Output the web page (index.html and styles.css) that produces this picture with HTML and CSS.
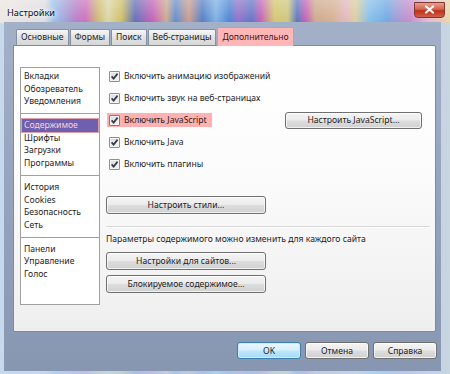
FILE: index.html
```html
<!DOCTYPE html>
<html lang="ru">
<head>
  <meta charset="UTF-8">
  <title>Настройки</title>
  <link rel="stylesheet" href="styles.css">
</head>
<body>
  <div class="window">
    <div class="titlebar">
      <span class="title">Настройки</span>
      <span class="close">
        <svg width="11" height="9" viewBox="0 0 11 9"><path d="M2 1.5 L9 7.5 M9 1.5 L2 7.5" stroke="#fff" stroke-width="2.2" stroke-linecap="round"/></svg>
      </span>
    </div>
    <div class="client">
      <div class="tabs">
        <div class="tab">Основные</div>
        <div class="tab">Формы</div>
        <div class="tab">Поиск</div>
        <div class="tab">Веб-страницы</div>
        <div class="tab active">Дополнительно</div>
      </div>
      <div class="panel">
        <div class="sections">
          <div class="group first">
            <div class="item">Вкладки</div>
            <div class="item">Обозреватель</div>
            <div class="item">Уведомления</div>
          </div>
          <div class="group">
            <div class="item selected">Содержимое</div>
            <div class="item">Шрифты</div>
            <div class="item">Загрузки</div>
            <div class="item">Программы</div>
          </div>
          <div class="group">
            <div class="item">История</div>
            <div class="item">Cookies</div>
            <div class="item">Безопасность</div>
            <div class="item">Сеть</div>
          </div>
          <div class="group">
            <div class="item">Панели</div>
            <div class="item">Управление</div>
            <div class="item">Голос</div>
          </div>
        </div>
        <div class="options">
          <div class="opt"><span class="label"><span class="check"></span>Включить анимацию изображений</span></div>
          <div class="opt"><span class="label"><span class="check"></span>Включить звук на веб-страницах</span></div>
          <div class="opt"><span class="label marked"><span class="check"></span>Включить JavaScript</span><button class="btn btn-js">Настроить JavaScript...</button></div>
          <div class="opt"><span class="label"><span class="check"></span>Включить Java</span></div>
          <div class="opt"><span class="label"><span class="check"></span>Включить плагины</span></div>
          <button class="btn btn-wide styles-btn">Настроить стили...</button>
          <div class="sep"></div>
          <p class="note">Параметры содержимого можно изменить для каждого сайта</p>
          <button class="btn btn-wide site-btn">Настройки для сайтов...</button>
          <button class="btn btn-wide block-btn">Блокируемое содержимое...</button>
        </div>
      </div>
      <div class="footer">
        <button class="btn btn-foot default">OK</button>
        <button class="btn btn-foot">Отмена</button>
        <button class="btn btn-foot">Справка</button>
      </div>
    </div>
  </div>
</body>
</html>
```
FILE: styles.css
```css
body {
  margin: 0;
  font-family: "Noto Sans", "Open Sans", sans-serif;
  font-size: 8.6px;
  color: #1e1e1e;
}

.window {
  width: 450px;
  height: 374px;
  box-sizing: border-box;
  padding: 0 9px 3px 4px;
  background:
    linear-gradient(180deg, rgba(255,255,255,0.35), rgba(255,255,255,0.1) 22px, rgba(190,215,240,0.8) 24px, rgba(190,215,240,0.8)),
    linear-gradient(90deg, #e9e4dc 0%, #dcd9e0 10%, #8fb8e8 12%, #9c8fd0 15%, #b070c0 17%, #c860b8 19%, #c8b860 22%, #d8d0a0 24%, #c8b850 27%, #5060b0 30%, #c050b0 34%, #c8a080 37%, #5080c8 39%, #c89080 42%, #4070c0 45%, #70a8e0 48%, #3878d0 51%, #8860c0 53%, #5068c0 56%, #c050b0 58%, #d0c060 61%, #c8c070 64%, #4868b8 66%, #c050b0 68%, #c8a080 70%, #d0a888 74%, #e0b0b8 77%, #d8c890 79%, #78b8e8 82%, #60a0e0 86%, #9090d0 88%, #c080c8 91%, #e0b0d0 95%, #e8d0a0 100%);
}

.titlebar {
  height: 22px;
  display: flex;
  align-items: center;
  justify-content: space-between;
  margin-left: -4px;
  margin-right: -9px;
  padding: 0 5px 0 7px;
  box-sizing: border-box;
}

.title {
  font-size: 9.2px;
  color: #111;
  text-shadow: 0 0 4px #fff, 0 0 6px #fff;
  margin-top: 2px;
}

.close {
  width: 29px;
  height: 14px;
  margin-top: -3px;
  border: 1px solid #7a3a30;
  border-radius: 0 0 4px 4px;
  background: linear-gradient(180deg, #e8a090 0%, #d86050 45%, #c03018 55%, #d06048 100%);
  display: flex;
  align-items: center;
  justify-content: center;
}

.client {
  height: 349px;
  box-sizing: border-box;
  padding: 6px 4px 0 0;
  background: linear-gradient(180deg, #a2b0c8 0%, #95a4bd 50%, #8897b1 100%);
  display: flex;
  flex-direction: column;
}

.tabs {
  display: flex;
  padding-left: 12px;
  height: 17px;
  align-items: flex-end;
  position: relative;
  z-index: 1;
}

.tab {
  height: 16px;
  line-height: 15px;
  padding: 0 4px;
  margin-right: 1px;
  white-space: nowrap;
  border: 1px solid #8390a6;
  border-bottom: none;
  border-radius: 2px 2px 0 0;
  background: linear-gradient(180deg, #f6f6f6, #e2e2e2 50%, #d6d6d6);
  box-sizing: border-box;
}

.tab.active {
  height: 19px;
  line-height: 18px;
  padding: 0 4px;
  margin-bottom: -1px;
  background: #ffb6b6;
  color: #3a1818;
  border-color: #e89090;
}

.panel {
  margin-left: 9px;
  width: 423px;
  height: 287px;
  box-sizing: border-box;
  border: 1px solid #7d8aa1;
  border-radius: 0 2px 2px 2px;
  background: linear-gradient(180deg, #ffffff 0%, #fcfcfc 40%, #efefef 100%);
  display: flex;
  padding: 21px 0 0 6px;
}

.sections {
  width: 80px;
  height: 238px;
  box-sizing: border-box;
  border: 1px solid #a0a0a0;
  background: #fff;
}

.group {
  padding: 5px 1px 5px 1px;
  border-bottom: 1px solid #a0a0a0;
}

.group.first {
  padding-top: 2px;
}

.group:last-child {
  border-bottom: none;
}

.item {
  height: 12.7px;
  line-height: 12.7px;
  padding-left: 2px;
}

.item.selected {
  background: #6e60ae;
  color: #ffd0d8;
  box-shadow: 0 0 0 1px #e0a0a8;
}

.options {
  flex: 1;
  display: flex;
  flex-direction: column;
  align-items: flex-start;
  padding: 2px 5px 0 6px;
}

.opt {
  height: 14px;
  width: 100%;
  margin-bottom: 8px;
  display: flex;
  align-items: center;
}

.label {
  display: flex;
  align-items: center;
  height: 14px;
  padding: 0 5px 0 2px;
  margin-left: 1px;
}

.label.marked {
  background: #ffb0b0;
}

.check {
  width: 9px;
  height: 9px;
  border: 1px solid #8e8f8f;
  border-radius: 1px;
  margin-right: 4px;
  background:
    url("data:image/svg+xml;utf8,<svg xmlns='http://www.w3.org/2000/svg' width='9' height='9'><path d='M1.6 4.4 L3.6 6.6 L7.6 1.6' fill='none' stroke='%23333a48' stroke-width='1.7'/></svg>") center no-repeat,
    linear-gradient(135deg, #dcdcdc, #f6f6f6);
  box-shadow: inset 0 0 0 1px #f4f4f4;
}

.marked .check {
  border-color: #a07070;
}

.btn {
  font-family: inherit;
  font-size: 8.6px;
  color: #1e1e1e;
  border: 1px solid #707070;
  border-radius: 3px;
  background: linear-gradient(180deg, #f4f4f4 0%, #ebebeb 48%, #dddddd 52%, #d0d0d0 100%);
  box-shadow: inset 0 0 0 1px rgba(255,255,255,0.7);
  padding: 0;
  height: 17px;
  text-align: center;
}

.btn-js {
  width: 137px;
  margin-left: auto;
  margin-right: 8px;
  flex-shrink: 0;
}

.btn-wide {
  width: 160px;
  height: 18px;
}

.styles-btn {
  margin-top: 17px;
}

.sep {
  width: 100%;
  height: 1px;
  margin-top: 12px;
  background: #d8d8d8;
  border-bottom: 1px solid #fff;
}

.note {
  margin: 5px 0 0 0;
  height: 13px;
  line-height: 13px;
}

.site-btn {
  margin-top: 6px;
}

.block-btn {
  margin-top: 5px;
}

.footer {
  display: flex;
  justify-content: flex-end;
  gap: 4px;
  margin-top: 10px;
}

.btn-foot {
  width: 64px;
  height: 17px;
}

.btn-foot.default {
  border-color: #3c7fb1;
  background: linear-gradient(180deg, #eaf6fd 0%, #d9f0fc 48%, #bee6fd 52%, #a7d9f5 100%);
  box-shadow: inset 0 0 0 1px #d0ecfa;
}
```
